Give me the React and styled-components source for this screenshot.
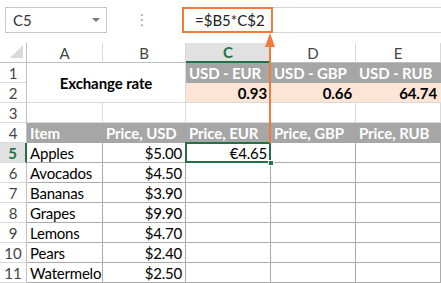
import React from "react";
import styled, { createGlobalStyle, css } from "styled-components";

const GlobalStyle = createGlobalStyle`
  html, body { margin: 0; padding: 0; background: #fff; }
  body { font-family: Lato, "Liberation Sans", sans-serif; }
  * { box-sizing: border-box; }
`;

const GREEN = "#217346";
const ORANGE = "#f37b3a";
const GRAY = "#a6a6a6";
const PEACH = "#fce4d6";
const LIGHT = "#d9d9d9";
const DARK = "#ababab";

const Page = styled.div`
  position: relative;
  width: 441px;
  height: 283px;
  overflow: hidden;
  background: #fff;
`;

const TopBar = styled.div`
  height: 43px;
  display: flex;
  align-items: flex-start;
  padding-top: 7px;
  padding-left: 5px;
`;

const NameBox = styled.div`
  width: 102px;
  height: 26px;
  border: 1px solid #c8c8c8;
  display: flex;
  align-items: center;
  justify-content: space-between;
  padding: 0 6px 0 7px;
  font-size: 15px;
  color: #333;
`;

const Caret = styled.span`
  width: 0;
  height: 0;
  border-left: 4px solid transparent;
  border-right: 4px solid transparent;
  border-top: 4px solid #777;
`;

const Dots = styled.div`
  width: 75px;
  height: 26px;
  display: flex;
  justify-content: center;
  align-items: center;
  color: #a0a0a0;
  font-size: 15px;
  padding-right: 5px;
  font-family: "DejaVu Sans", sans-serif;
`;

const FormulaBar = styled.div`
  flex: 1;
  height: 26px;
  border-top: 1px solid #d4d4d4;
  border-bottom: 1px solid #d4d4d4;
  display: flex;
`;

const FormulaBox = styled.div`
  width: 91px;
  height: 26px;
  margin-top: -1px;
  border: 2px solid ${ORANGE};
  display: flex;
  align-items: center;
  padding-left: 11px;
  font-size: 15px;
  color: #222;
`;

const Grid = styled.div`
  display: grid;
  grid-template-columns: 27px 76px 83px 85px 85px 85px;
  grid-auto-rows: 20px;
`;

const Cell = styled.div`
  position: relative;
  display: flex;
  align-items: center;
  font-size: 15px;
  letter-spacing: -0.2px;
  color: #000;
  white-space: nowrap;
  overflow: hidden;
  padding: 0 3px;
  border-right: 1px solid ${(p) => p.$line || LIGHT};
  border-bottom: 1px solid ${(p) => p.$lineB || p.$line || LIGHT};
  background: ${(p) => p.$bg || "#fff"};
  justify-content: ${(p) => (p.$right ? "flex-end" : p.$center ? "center" : "flex-start")};
  ${(p) => p.$bold && css`font-weight: 700; letter-spacing: -0.1px;`}
  ${(p) => p.$white && css`color: #fff;`}
  ${(p) => p.$span && css`grid-column: span 2; grid-row: span 2;`}
  ${(p) => p.$overflow && css`overflow: visible; z-index: 1;`}
`;

const ColHead = styled.div`
  display: flex;
  align-items: center;
  justify-content: center;
  font-size: 15px;
  color: #444;
  border-right: 1px solid ${LIGHT};
  border-bottom: 1px solid #bfbfbf;
  background: #fff;
  ${(p) =>
    p.$active &&
    css`
      background: #e1e1e1;
      color: ${GREEN};
      font-weight: 700;
      border-bottom: 2px solid ${GREEN};
    `}
`;

const Corner = styled.div`
  position: relative;
  border-right: 1px solid #bfbfbf;
  border-bottom: 1px solid #bfbfbf;
  &::after {
    content: "";
    position: absolute;
    right: 3px;
    bottom: 4px;
    width: 0;
    height: 0;
    border-left: 13px solid transparent;
    border-bottom: 13px solid #dadada;
  }
`;

const RowHead = styled.div`
  display: flex;
  align-items: center;
  justify-content: center;
  font-size: 15px;
  color: #444;
  border-right: 1px solid #bfbfbf;
  border-bottom: 1px solid ${LIGHT};
  background: #fff;
  ${(p) =>
    p.$active &&
    css`
      background: #e1e1e1;
      color: ${GREEN};
      font-weight: 700;
      border-right: 2px solid ${GREEN};
    `}
`;

const Selection = styled.div`
  position: absolute;
  left: -1px;
  top: -1px;
  right: -1px;
  bottom: -1px;
  border: 2px solid ${GREEN};
  pointer-events: none;
`;

const Handle = styled.div`
  position: absolute;
  right: -4px;
  bottom: -4px;
  width: 6px;
  height: 6px;
  background: ${GREEN};
  border: 1px solid #fff;
  z-index: 3;
`;

const Arrow = styled.svg`
  position: absolute;
  left: 262px;
  top: 33px;
  z-index: 5;
`;

const rows = [
  ["Apples", "$5.00", "€4.65"],
  ["Avocados", "$4.50"],
  ["Bananas", "$3.90"],
  ["Grapes", "$9.90"],
  ["Lemons", "$4.70"],
  ["Pears", "$2.40"],
  ["Watermelon", "$2.50"],
];

export default function App() {
  return (
    <Page>
      <GlobalStyle />
      <TopBar>
        <NameBox>
          <span>C5</span>
          <Caret />
        </NameBox>
        <Dots>⋮</Dots>
        <FormulaBar>
          <FormulaBox>=$B5*C$2</FormulaBox>
        </FormulaBar>
      </TopBar>
      <Grid>
        <Corner />
        <ColHead>A</ColHead>
        <ColHead>B</ColHead>
        <ColHead $active>C</ColHead>
        <ColHead>D</ColHead>
        <ColHead>E</ColHead>

        <RowHead>1</RowHead>
        <Cell $span $center $bold>Exchange rate</Cell>
        <Cell $bg={GRAY} $line={GRAY} $bold $white>USD - EUR</Cell>
        <Cell $bg={GRAY} $line={GRAY} $bold $white>USD - GBP</Cell>
        <Cell $bg={GRAY} $line={GRAY} $bold $white>USD - RUB</Cell>

        <RowHead>2</RowHead>
        <Cell $bg={PEACH} $line={PEACH} $lineB={LIGHT} $right $bold>0.93</Cell>
        <Cell $bg={PEACH} $line={PEACH} $lineB={LIGHT} $right $bold>0.66</Cell>
        <Cell $bg={PEACH} $line={PEACH} $lineB={LIGHT} $right $bold>64.74</Cell>

        <RowHead>3</RowHead>
        <Cell />
        <Cell />
        <Cell />
        <Cell />
        <Cell />

        <RowHead>4</RowHead>
        <Cell $bg={GRAY} $line={GRAY} $bold $white>Item</Cell>
        <Cell $bg={GRAY} $line={GRAY} $bold $white>Price, USD</Cell>
        <Cell $bg={GRAY} $line={GRAY} $bold $white>Price, EUR</Cell>
        <Cell $bg={GRAY} $line={GRAY} $bold $white>Price, GBP</Cell>
        <Cell $bg={GRAY} $line={GRAY} $bold $white>Price, RUB</Cell>

        {rows.map(([item, usd, eur], i) => (
          <React.Fragment key={item}>
            <RowHead $active={i === 0}>{i + 5}</RowHead>
            <Cell $line={DARK}>{item}</Cell>
            <Cell $line={DARK} $right>{usd}</Cell>
            <Cell $line={DARK} $right $overflow={i === 0}>
              {eur}
              {i === 0 && (
                <>
                  <Selection />
                  <Handle />
                </>
              )}
            </Cell>
            <Cell $line={DARK} />
            <Cell $line={DARK} />
          </React.Fragment>
        ))}
      </Grid>
      <Arrow width="16" height="112" viewBox="0 0 16 112">
        <polygon points="8,0 3,14 13,14" fill={ORANGE} />
        <rect x="7" y="10" width="2" height="100" fill={ORANGE} />
      </Arrow>
    </Page>
  );
}
